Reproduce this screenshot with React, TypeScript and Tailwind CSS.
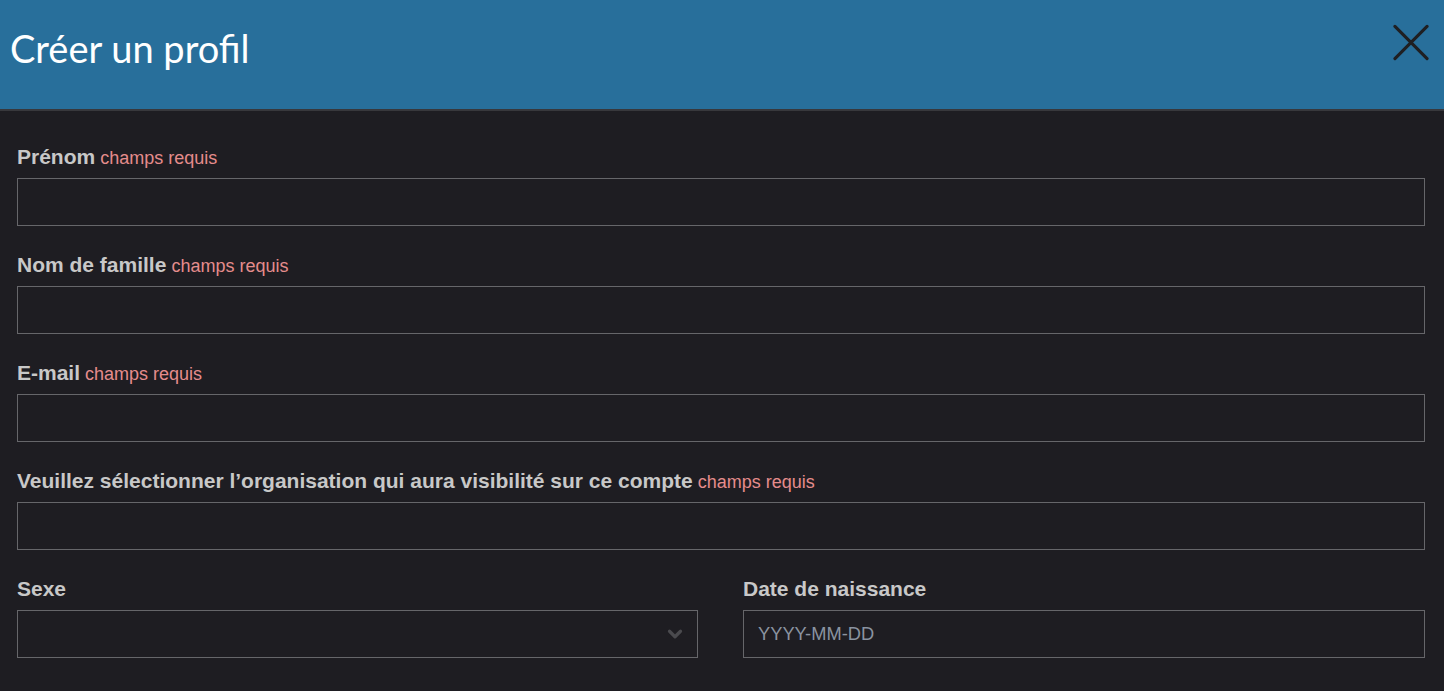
import { ChevronDown } from 'lucide-react';

const labelCls = "block h-[24px] text-[21px] font-bold text-[#c8c8c8] leading-[24px] mb-[9px] whitespace-nowrap";
const inputCls = "w-full h-12 bg-transparent border border-[#66666a] px-[14px] text-[18.3px] text-[#c8c8c8] outline-none placeholder:text-[#8a93a0]";

function Required() {
  return <span className="font-normal text-[18px] text-[#e58c8c]"> champs requis</span>;
}

function Field({ label, required }: { label: string; required?: boolean }) {
  return (
    <div className="mb-[27px]">
      <label className={labelCls}>
        {label}
        {required && <Required />}
      </label>
      <input type="text" className={inputCls} />
    </div>
  );
}

export default function App() {
  return (
    <div className="min-h-screen bg-[#1e1d22]" style={{ fontFamily: '"Liberation Sans", Arial, sans-serif' }}>
      <header className="h-[111px] bg-[#286f9b] border-b-2 border-[#38383c] flex items-start justify-between pl-[10px] pr-[15px]">
        <h1 className="mt-[28px] text-[38px] text-white leading-[40px]" style={{ fontFamily: 'Lato, "Noto Sans", sans-serif' }}>
          Créer un profil
        </h1>
        <button className="mt-[24px] w-9 h-9 flex items-center justify-center">
          <svg width="37" height="37" viewBox="0 0 37 37" fill="none" stroke="#1f1f22" strokeWidth="3.2" strokeLinecap="round">
            <path d="M2 2 L35 35 M35 2 L2 35" />
          </svg>
        </button>
      </header>

      <main className="px-[17px] pt-[34px] pr-[19px]">
        <Field label="Prénom" required />
        <Field label="Nom de famille" required />
        <Field label="E-mail" required />
        <Field label="Veuillez sélectionner l’organisation qui aura visibilité sur ce compte" required />

        <div className="grid grid-cols-[681px_1fr] gap-[45px]">
          <div>
            <label className={labelCls}>Sexe</label>
            <div className="relative">
              <select className={`${inputCls} appearance-none`}>
                <option value=""></option>
              </select>
              <ChevronDown className="absolute right-[12px] top-1/2 -translate-y-1/2 text-[#4a4a4e]" size={22} strokeWidth={3.5} />
            </div>
          </div>
          <div>
            <label className={labelCls}>Date de naissance</label>
            <input type="text" placeholder="YYYY-MM-DD" className={inputCls} />
          </div>
        </div>
      </main>
    </div>
  );
}
